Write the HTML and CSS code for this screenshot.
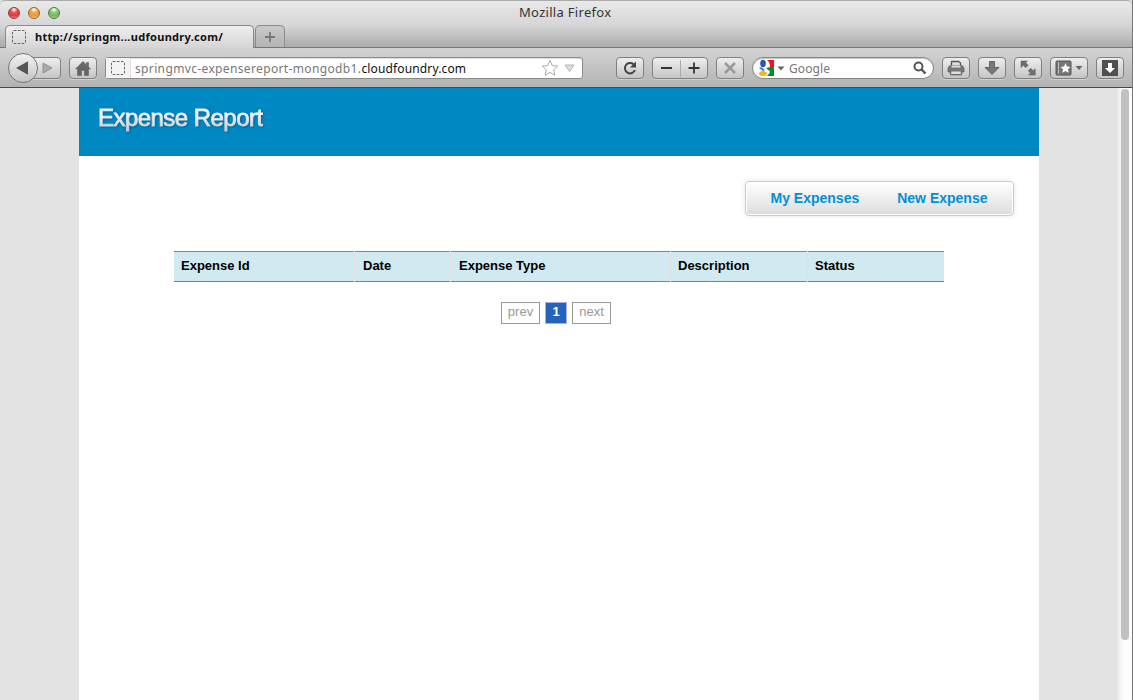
FILE: index.html
```html
<!DOCTYPE html>
<html lang="en">
<head>
<meta charset="utf-8">
<title>Expense Report</title>
<link rel="stylesheet" href="styles.css">
</head>
<body>
<div class="window">
  <header class="chrome">
    <div class="titlebar">
      <div class="lights"><i class="light red"></i><i class="light amber"></i><i class="light green"></i></div>
      <span class="window-title">Mozilla Firefox</span>
    </div>
    <div class="tabs">
      <div class="tab">
        <svg width="14" height="14"><rect x=".5" y=".5" width="13" height="13" rx="1.5" fill="none" stroke="#666" stroke-dasharray="2.6 1.4"/></svg>
        <span class="tab-title">http://springm...udfoundry.com/</span>
      </div>
      <div class="new-tab"><svg width="12" height="12"><path d="M6 1v10M1 6h10" stroke="#777" stroke-width="1.8"/></svg></div>
    </div>
    <div class="toolbar">
      <div class="history">
        <div class="back"><svg width="30" height="30"><path d="M8 15L20 8.300V21.700z" fill="#555"/></svg></div>
        <div class="btn forward"><svg width="12" height="12"><path d="M2 1L11 6L2 11z" fill="#aaa" stroke="#888" stroke-width=".8"/></svg></div>
      </div>
      <div class="btn home"><svg width="16" height="15"><path d="M8 .5L15.500 8H13.500V14.500H9.500V9.500H6.500V14.500H2.500V8H.5zM11.500 1.500h2v4l-2-2z" fill="#666" stroke="#555" stroke-width=".5"/></svg></div>
      <div class="urlbar">
        <div class="site-icon"><svg width="14" height="14"><rect x=".5" y=".5" width="13" height="13" rx="1.500" fill="none" stroke="#666" stroke-dasharray="2.6 1.4"/></svg></div>
        <span class="url">springmvc-expensereport-mongodb1.<b>cloudfoundry.com</b></span>
        <svg class="url-icons" width="36" height="18"><path d="M9 1.500L11.300 6.600L16.700 7.100L12.700 10.800L13.900 16.300L9 13.400L4.100 16.300L5.300 10.800L1.300 7.100L6.700 6.600z" fill="#fff" stroke="#aaa"/><path d="M24 6h9L28.500 12.500z" fill="#ddd" stroke="#b4b4b4"/></svg>
      </div>
      <div class="btn reload"><svg width="16" height="16"><path d="M13 10A5.200 5.200 0 1 1 11.500 4.200" fill="none" stroke="#444" stroke-width="2"/><path d="M14 1.500V7.500H8z" fill="#444"/></svg></div>
      <div class="btn zoomer"><svg width="54" height="20"><path d="M8 10h11M35.500 10h11M41 4.500v11" stroke="#333" stroke-width="1.800"/><path d="M27.500 2v17" stroke="#aaa"/></svg></div>
      <div class="btn stop"><svg width="14" height="14"><path d="M2 2L12 12M12 2L2 12" stroke="#999" stroke-width="2.500"/></svg></div>
      <div class="search">
        <svg width="17" height="18"><path d="M9 1h7v7h-4q0-5-3-7z" fill="#ef1414"/><path d="M12 8h4v9H9q3-3 3-4.500L8 9z" fill="#078b35"/><ellipse cx="5" cy="4.500" rx="2.800" ry="3.700" fill="#2456b5"/><path d="M1 9l2-1 4 3-2 1z" fill="#4676ca"/><ellipse cx="5" cy="14.500" rx="3.900" ry="2.500" fill="#f5b521"/></svg>
        <svg class="caret" width="8" height="5"><path d="M.5 .5h7L4 4.500z" fill="#666"/></svg>
        <span class="search-name">Google</span>
        <svg class="lens" width="14" height="14"><circle cx="5.500" cy="5.500" r="4" fill="none" stroke="#555" stroke-width="2"/><path d="M8.500 8.500L12.500 12.500" stroke="#555" stroke-width="2.400"/></svg>
      </div>
      <div class="btn"><svg width="18" height="16"><path d="M4.500 6V1.500h7L13.500 3v3" fill="#ddd" stroke="#555" stroke-width="1.300"/><path d="M3 5.500h12q2 1 2 3v3.500h-2l-.5 3h-11L3 12H1V8.500q0-2 2-3z" fill="#777" stroke="#555" stroke-width=".6"/><path d="M4.500 11.500h9l.5 2.500H4zM4.500 5.500h9v2h-9z" fill="#ddd"/></svg></div>
      <div class="btn"><svg width="16" height="16"><path d="M5.500 1.500h5v6h4.500L8 14.500L1 7.500h4.500z" fill="#777" stroke="#555" stroke-width=".8"/></svg></div>
      <div class="btn"><svg width="16" height="16"><path d="M1 1h6.500L5.700 2.800L8.200 5.300L5.700 7.800L3.200 5.300L1 7.500zM15.200 15H8.500l2-2-2.300-2.300L10.700 8.200L13.200 10.700l2-2z" fill="#707070" stroke="#555" stroke-width=".5"/></svg></div>
      <div class="btn bookmark"><svg width="28" height="16"><path d="M2 1h13q1 0 1 1v12q0 1-1 1H2q-1 0-1-1V2q0-1 1-1z" fill="#777" stroke="#555"/><path d="M3.500 2v12" stroke="#bbb"/><path d="M10.500 3.200L12 6.500L15.500 6.900L12.900 9.200L13.700 12.700L10.500 10.900L7.300 12.700L8.100 9.200L5.500 6.900L9 6.500z" fill="#fff"/><path d="M20.500 6h7L24 10z" fill="#666"/></svg></div>
      <div class="btn"><svg width="16" height="16"><path d="M0 0h16v16H0z" fill="#505050"/><path d="M6 3h4v5h3L8 13L3 8h3z" fill="#fff"/></svg></div>
    </div>
  </header>
  <div class="viewport">
    <main class="page">
      <div class="banner"><h1>Expense Report</h1></div>
      <nav class="menu"><a class="my">My Expenses</a><a class="new">New Expense</a></nav>
      <div class="table-head">
        <span class="id">Expense Id</span><span class="date">Date</span><span class="type">Expense Type</span><span class="desc">Description</span><span class="status">Status</span>
      </div>
      <div class="pager"><span class="step prev">prev</span><span class="current">1</span><span class="step next">next</span></div>
    </main>
    <aside class="scrollbar"><div class="thumb"></div></aside>
  </div>
</div>
</body>
</html>
```
FILE: styles.css
```css
* { box-sizing: border-box; }
body { margin: 0; background: #e3e3e3; font-family: "Liberation Sans", Arial, sans-serif; overflow: hidden; }
svg { display: block; flex: none; }
.window { width: 1133px; height: 700px; display: flex; flex-direction: column; border-right: 1px solid #777; }
.chrome { height: 88px; flex: none; background: linear-gradient(#e9e9e9 0, #d6d6d6 24px, #a9a9a9 47px); border-top: 1px solid #aaa; font-family: "Noto Sans", "Open Sans", sans-serif; border-radius: 5px 5px 0 0; white-space: nowrap; }
.titlebar { height: 24px; display: flex; align-items: center; }
.lights { display: flex; gap: 8px; padding-left: 8px; width: 519px; }
.light { width: 12px; height: 12px; border-radius: 50%; border: 1px solid; }
.red { background: radial-gradient(circle at 50% 15%, #fff 0, #ed4b4b 35%, #d93c3c 65%, #ffaaa2); border-color: #903b38; }
.amber { background: radial-gradient(circle at 50% 15%, #fff 0, #efa64a 35%, #e79b38 65%, #ffe58b); border-color: #976329; }
.green { background: radial-gradient(circle at 50% 15%, #fff 0, #8cca79 35%, #72b65f 65%, #c9f69f); border-color: #4d793e; }
.window-title { font-size: 13px; color: #333; line-height: 20px; padding-bottom: 2px; letter-spacing: .3px; }
.tabs { height: 23px; display: flex; gap: 1px; padding-left: 5px; border-bottom: 1px solid #777; }
.tab { width: 249px; height: 23px; display: flex; align-items: center; gap: 9px; padding-left: 6px; border: 1px solid #8b8b8b; border-bottom: 0; border-radius: 5px 5px 0 0; background: linear-gradient(#efefef, #d5d5d5); }
.tab-title { font-size: 11px; font-weight: 700; color: #111; letter-spacing: .3px; padding-bottom: 2px; }
.new-tab { width: 30px; height: 22px; display: flex; align-items: center; justify-content: center; border: 1px solid #8b8b8b; border-bottom: 0; border-radius: 5px 5px 0 0; background: linear-gradient(#c9c9c9, #b4b4b4); }
.toolbar { height: 40px; display: flex; align-items: center; gap: 8px; padding: 1px 0 0 8px; background: linear-gradient(#d4d4d4, #b2b2b2); border-bottom: 1px solid #484848; }
.history { display: flex; align-items: center; width: 53px; }
.back { width: 30px; height: 30px; border: 1px solid #777; border-radius: 50%; background: linear-gradient(#f1f1f1, #c4c4c4); z-index: 1; flex: none; display: flex; align-items: center; justify-content: center; }
.btn { width: 28px; height: 22px; flex: none; display: flex; align-items: center; justify-content: center; border: 1px solid #808080; border-radius: 4px; background: linear-gradient(#eee, #c5c5c5); box-shadow: 0 1px #d0d0d0; }
.forward { margin-left: -5px; border-radius: 0 4px 4px 0; }
.urlbar { width: 478px; height: 22px; display: flex; align-items: center; border: 1px solid #8b8b8b; border-radius: 3px; background: #fff; box-shadow: inset 0 1px #ddd; }
.site-icon { width: 25px; height: 20px; padding: 3px 0 0 5px; border-right: 1px solid #ddd; background: #f3f3f3; }
.url { padding-left: 4px; font-size: 12px; color: #777; letter-spacing: .36px; }
.url b { color: #111; font-weight: 400; letter-spacing: .14px; }
.url-icons { margin-left: auto; margin-right: 5px; }
.reload { margin-left: 25px; }
.zoomer { width: 56px; }
.search { width: 182px; height: 22px; display: flex; align-items: center; padding: 0 6px 0 5px; border: 1px solid #858585; border-radius: 11px; background: #fff; box-shadow: inset 0 1px #ccc; }
.caret { margin-left: 2px; }
.search-name { margin-left: 4px; font-size: 12px; color: #777; letter-spacing: .1px; }
.lens { margin-left: auto; }
.bookmark { width: 38px; }
.viewport { flex: 1; min-height: 0; display: flex; justify-content: space-between; padding-left: 79px; background: #e3e3e3; }
.page { width: 960px; height: 100%; background: #fff; display: flex; flex-direction: column; white-space: nowrap; }
.banner { height: 68px; background: #0088c3; padding: 15px 0 0 19px; }
h1 { width: max-content; margin: 0; font-size: 24px; line-height: 30px; font-weight: 400; letter-spacing: -.54px; color: transparent; background: linear-gradient(#fff 15%, #d0d0d0 90%); background-clip: text; -webkit-text-stroke: .9px transparent; filter: drop-shadow(1px 1px 1px #006595); }
.menu { width: 269px; height: 35px; margin: 25px 25px 0 auto; padding: 0 0 2px 24.5px; display: flex; align-items: center; gap: 38px; border: 1px solid #ccc; border-radius: 4px; background: linear-gradient(#fff, #dcdcdc); box-shadow: inset 0 0 0 1px #fff, 0 0 5px #e2e2e2; font-size: 14px; font-weight: 700; color: #0090d7; }
.table-head { width: 770px; height: 31px; margin: 35px 0 0 95px; display: grid; grid-template-columns: 180px 95px 219px 136px 136px; column-gap: 1px; background: #e1dfdf; font-size: 13px; font-weight: 700; color: #000; }
.table-head span { padding-left: 7px; line-height: 28px; background: #d1eaf1; border-top: 1px solid #17a8d5; border-bottom: 1px solid #17a8d5; }
.table-head .date, .table-head .type { padding-left: 8px; }
.pager { display: flex; gap: 5px; margin: 20px 0 0 422px; font-size: 13px; line-height: 17px; text-align: center; }
.step { width: 39px; height: 22px; border: 1px solid #999; color: #999; }
.current { width: 22px; height: 22px; border: 1px solid #aaaaec; background: #2263bb; color: #fff; font-weight: 700; }
.scrollbar { width: 14px; height: 100%; padding: 1px 0 0 3px; background: linear-gradient(90deg, #eee, #fff 50%, #fafafa); }
.thumb { width: 8px; height: 551px; border-radius: 4px; background: #c1c1c1; }
```
